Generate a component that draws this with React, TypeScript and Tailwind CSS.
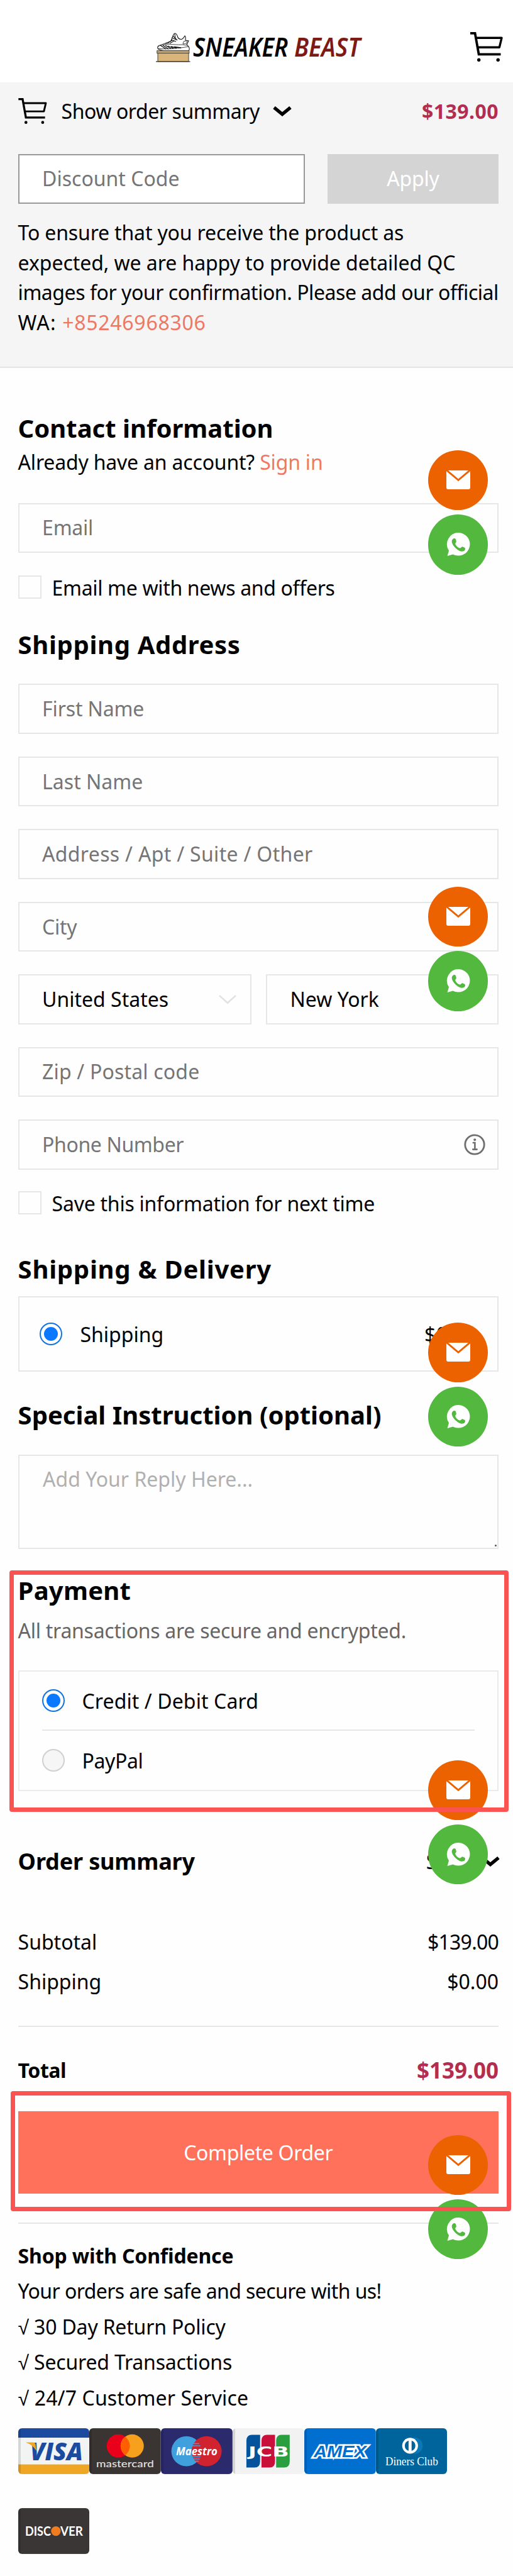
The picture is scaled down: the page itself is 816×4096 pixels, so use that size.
import React from 'react';
import { clsx } from 'clsx';

// ===== Icons =====

function CartIcon({ className }: { className?: string }) {
  return (
    <svg viewBox="0 0 52 47" fill="none" stroke="#000" className={className}>
      <path d="M0 1.9H7.6L13.6 35.4H48.5" strokeWidth="3.8" />
      <path d="M9.2 9.2H50L46.4 24.2H11.8" strokeWidth="3.4" strokeLinejoin="round" />
      <circle cx="13.7" cy="44.3" r="2.7" fill="#000" stroke="none" />
      <circle cx="44.2" cy="44.3" r="2.7" fill="#000" stroke="none" />
    </svg>
  );
}

function ChevronIcon({ className }: { className?: string }) {
  return (
    <svg viewBox="0 0 30 16" fill="none" stroke="currentColor" strokeWidth="5.4" className={className}>
      <path d="M2 2L15 12.6L28 2" />
    </svg>
  );
}

function InfoIcon() {
  return (
    <svg viewBox="0 0 34 34" fill="none" stroke="#6f6f6f" className="w-[34px] h-[34px]">
      <circle cx="17" cy="17" r="15.2" strokeWidth="2.8" />
      <path d="M14.8 14H17.4V24.4M14.2 24.6H20.6" strokeWidth="2.6" strokeLinecap="round" />
      <circle cx="17.2" cy="9.2" r="2" fill="#6f6f6f" stroke="none" />
    </svg>
  );
}

function MailIcon() {
  return (
    <svg viewBox="0 0 38 30" className="w-[38px] h-[30px]">
      <path d="M3 0H35L19 13.6Z" fill="#fff" />
      <path d="M0 1.2L19 17.2L38 1.2V27.6Q38 30 35.6 30H2.4Q0 30 0 27.6Z" fill="#fff" />
    </svg>
  );
}

function WhatsAppIcon() {
  return (
    <svg viewBox="0 0 38 37" className="w-[38px] h-[37px]">
      <path d="M19.2 0A18.3 18.3 0 1 1 10.4 34.4L1.6 37L4 28.4A18.3 18.3 0 0 1 19.2 0Z" fill="#fff" />
      <path
        d="M11.6 9.2C13.2 8.4 14.6 9.2 15 10.6L15.8 13.8C16.2 15.4 14.2 16.2 14.2 17.4C14.8 20.4 18.6 24 21.6 24.6C23.2 24.8 23.8 21.8 25.6 22.2L29 23.8C30.6 24.6 30.2 27.2 28.8 28.6C26.6 30.6 22 29.8 18.4 27.4C13 23.8 9 18.6 8.6 14C8.6 11.8 9.8 10.2 11.6 9.2Z"
        fill="#52b83e"
      />
    </svg>
  );
}

// ===== Logo =====

function Logo() {
  return (
    <svg viewBox="0 -12 336 68" className="w-[336px] h-[68px]">
      {/* shoe */}
      <path
        d="M4 21C10 18 20 16 24 13C26 8 27 4 29 1.5C31 0 33 2 34 5C35 9 37 11 41 10.5C44 9 45 7 46 5C48 6 47 9 47 12L52 13L49 19L51 21C54 24 54 28 51 29C40 31 14 30 6 27C2 26 2 23 4 21Z"
        fill="#fff"
        stroke="#1a1a1a"
        strokeWidth="1.1"
      />
      <path d="M3 22C16 15 24 20 42 19L49 20M4 25C18 27 36 25 52 22" fill="none" stroke="#333" strokeWidth="0.9" />
      <path d="M4 21L14 17L22 16L18 19Z" fill="#777" />
      <path d="M7 20L16 26M11 20L20 26M15 20L24 25.5M19 21L28 25M24 22L33 24.5M29 22.5L40 24" stroke="#111" strokeWidth="1.3" />
      <path d="M19 16L26 12M22 17L29 13M25 8L32 11M24 11L32 14M27 5L34 12M30 2L31 10" stroke="#111" strokeWidth="1.1" />
      <path d="M44 14L50 12.5L48.5 17L43 18Z" fill="#fff" stroke="#222" strokeWidth="0.8" />
      <path d="M14 28.6H51" stroke="#111" strokeWidth="1.4" />
      {/* box */}
      <rect x="3" y="32" width="49" height="13.8" fill="#d9b57c" stroke="#4a4234" strokeWidth="1" />
      <rect x="1.8" y="28.6" width="51" height="4" fill="#c3a571" stroke="#4a4234" strokeWidth="1" />
      <path d="M0 45.8H54.5" stroke="#333" strokeWidth="1.2" />
      <text
        x="59" y="37.6" textLength="151" lengthAdjust="spacingAndGlyphs" fontSize="41"
        className="font-['Noto_Sans'] font-semibold italic" fill="#000"
      >
        SNEAKER
      </text>
      <text
        x="220" y="37.6" textLength="105" lengthAdjust="spacingAndGlyphs" fontSize="41"
        className="font-['Noto_Sans'] font-semibold italic" fill="#7d1a14"
      >
        BEAST
      </text>
    </svg>
  );
}

// ===== Payment cards =====

function Card({ bg, children }: { bg: string; children: React.ReactNode }) {
  return (
    <svg viewBox="0 0 114 73" className="w-[113.8px] h-[73px] rounded-[6px]">
      <rect width="114" height="73" fill={bg} />
      {children}
      <rect width="4" height="73" fill="#000" opacity="0.12" />
    </svg>
  );
}

function VisaCard() {
  return (
    <Card bg="#f2f3f3">
      <rect width="114" height="15" fill="#1c4a9f" />
      <rect y="57.6" width="114" height="15.4" fill="#eea624" />
      <text
        x="19" y="50.8" textLength="84" lengthAdjust="spacingAndGlyphs" fontSize="39"
        className="font-['Open_Sans'] font-extrabold italic" fill="#1c4a9f"
      >
        VISA
      </text>
      <path d="M12 22.6H23.5Q27 22.8 27.6 26L29 36Q23 26.5 12 22.6Z" fill="#eea624" />
    </Card>
  );
}

function MasterCard() {
  return (
    <Card bg="#3a3433">
      <circle cx="46.2" cy="28.2" r="18.5" fill="#eb001b" />
      <circle cx="68.4" cy="28.2" r="18.5" fill="#f6a01e" />
      <path d="M57.3 13.4A18.5 18.5 0 0 1 57.3 43A18.5 18.5 0 0 1 57.3 13.4Z" fill="#ff5f00" />
      <text
        x="11" y="62" textLength="92" lengthAdjust="spacingAndGlyphs" fontSize="16"
        className="font-['Lato'] font-medium" fill="#e3e1e1"
      >
        mastercard
      </text>
    </Card>
  );
}

function MaestroCard() {
  return (
    <Card bg="#2b2a6c">
      <circle cx="40.6" cy="36.6" r="24" fill="#409fdd" />
      <circle cx="72.8" cy="36.6" r="24" fill="#d0222f" />
      <path d="M52 24.5H61M50 28H63M50 45.5H63M52 49H62M55 52.5H60" stroke="#409fdd" strokeWidth="1.5" />
      <text
        x="24" y="43" textLength="66" lengthAdjust="spacingAndGlyphs" fontSize="17.5"
        className="font-['Open_Sans'] font-bold italic" fill="#fff"
      >
        Maestro
      </text>
    </Card>
  );
}

function JcbCard() {
  return (
    <Card bg="#f2f2f2">
      <path d="M22 20Q22 10.4 31 10.4H43.8V53Q43.8 62.6 35 62.6H22Z" fill="#02529c" />
      <path d="M46 20Q46 10.4 55 10.4H67.6V53Q67.6 62.6 59 62.6H46Z" fill="#c8103a" />
      <path d="M69.4 20Q69.4 10.4 78 10.4H91V53Q91 62.6 82 62.6H69.4Z" fill="#2a9f40" />
      <text
        x="25" y="44.8" textLength="65" lengthAdjust="spacingAndGlyphs" fontSize="21.5"
        className="font-['DejaVu_Sans'] font-bold" fill="#fff"
      >
        JCB
      </text>
    </Card>
  );
}

function AmexCard() {
  return (
    <Card bg="#016fd0">
      <text
        x="15" y="46" textLength="84" lengthAdjust="spacingAndGlyphs" fontSize="26"
        className="font-['Liberation_Sans'] font-bold italic" fill="#016fd0"
        stroke="#fff" strokeWidth="5" paintOrder="stroke"
      >
        AMEX
      </text>
    </Card>
  );
}

function DinersCard() {
  return (
    <Card bg="#00649c">
      <ellipse cx="62" cy="27.8" rx="12.5" ry="13" fill="#0a78b4" />
      <circle cx="54.4" cy="27.8" r="12.6" fill="#fff" />
      <path d="M52 19.6A8.6 8.6 0 0 0 52 36ZM56.8 19.6A8.6 8.6 0 0 1 56.8 36Z" fill="#00649c" />
      <text
        x="15" y="58.6" textLength="84" lengthAdjust="spacingAndGlyphs" fontSize="18.5"
        className="font-['Liberation_Serif']" fill="#fff"
      >
        Diners Club
      </text>
    </Card>
  );
}

function DiscoverCard() {
  return (
    <Card bg="#3a3635">
      <text
        x="11" y="43.8" textLength="41" lengthAdjust="spacingAndGlyphs" fontSize="20.5"
        className="font-['Lato'] font-bold" fill="#fff"
      >
        DISC
      </text>
      <circle cx="60" cy="36.6" r="7.7" fill="#ef7d20" />
      <text
        x="67" y="43.8" textLength="36" lengthAdjust="spacingAndGlyphs" fontSize="20.5"
        className="font-['Lato'] font-bold" fill="#fff"
      >
        VER
      </text>
    </Card>
  );
}

// ===== Form pieces =====

function Field({ label, className, children }: { label: string; className?: string; children?: React.ReactNode }) {
  return (
    <div className={clsx('h-[79.2px] flex items-center justify-between border-2 border-[#e7e7e7] pl-[36.5px]', className)}>
      <span>{label}</span>
      {children}
    </div>
  );
}

function Check({ label, className }: { label: string; className?: string }) {
  return (
    <label className={clsx('flex items-center h-12', className)}>
      <span className="w-[37px] h-[37px] mb-[3px] border-2 border-[#e7e7e7]" />
      <span className="ml-[17px]">{label}</span>
    </label>
  );
}

function Radio({ checked }: { checked?: boolean }) {
  return (
    <span
      className={clsx(
        'w-[36.4px] h-[36.4px] rounded-full flex items-center justify-center',
        checked ? 'border-[2.5px] border-[#1274e0]' : 'border-2 border-[#d0d0d0] bg-[#f6f6f6]',
      )}
    >
      {checked && <span className="w-[22px] h-[22px] rounded-full bg-[#0a78ff]" />}
    </span>
  );
}

// Floating mail + WhatsApp buttons
function ContactButtons({ className }: { className: string }) {
  return (
    <div className={clsx('absolute left-[680.7px] flex flex-col gap-[6.6px]', className)}>
      <a className="w-[95.7px] h-[95.7px] rounded-full bg-[#ec6200] flex items-center justify-center pb-[1px]">
        <MailIcon />
      </a>
      <a className="w-[95.7px] h-[95.7px] rounded-full bg-[#52b83e] flex items-center justify-center">
        <WhatsAppIcon />
      </a>
    </div>
  );
}

export default function App() {
  return (
    <div className="relative w-[816px] h-[4096px] overflow-hidden bg-[#fefefe] text-black text-[32px] leading-[48px] font-['Noto_Sans',sans-serif] whitespace-nowrap">
      {/* Header */}
      <header className="h-[131px] bg-white flex items-start justify-between pl-[248px] pr-[16.5px] pt-[40px]">
        <Logo />
        <CartIcon className="w-[52px] h-[47px] mt-[11px]" />
      </header>

      {/* Summary bar */}
      <section className="h-[454px] bg-[#f5f5f5] border-b-2 border-[#e5e5e5] pl-[28.6px] pr-[23px] pt-[25px]">
        <div className="h-[41px] flex items-center">
          <CartIcon className="w-[46px] h-[41px]" />
          <span className="ml-[23px] tracking-[-0.44px]">Show order summary</span>
          <ChevronIcon className="w-[30px] h-[16px] ml-[21px]" />
          <span className="ml-auto font-bold text-[#b32d50] tracking-[0.45px]">$139.00</span>
        </div>
        <div className="mt-[47.7px] h-[79.4px] flex">
          <div className="w-[456px] border-2 border-[#999] bg-white text-[#757575] pl-[36.5px] flex items-center">Discount Code</div>
          <button className="ml-auto w-[272px] bg-[#d4d4d4] text-white tracking-[-0.19px]">Apply</button>
        </div>
        <p className="mt-[22px] leading-[47.5px]">
          <span className="tracking-[-0.16px]">To ensure that you receive the product as</span>
          <br />
          <span className="tracking-[-0.07px]">expected, we are happy to provide detailed QC</span>
          <br />
          <span className="tracking-[-0.45px]">images for your confirmation. Please add our official</span>
          <br />
          <span className="tracking-[1.2px]">WA: </span>
          <span className="text-[#ee7864] tracking-[0.72px]">+85246968306</span>
        </p>
      </section>

      <main className="pl-[28.6px] pr-[23px] pt-[72px]">
        {/* Contact */}
        <h2 className="text-[40px] font-bold">Contact information</h2>
        <p className="mt-[5.6px] tracking-[-0.19px]">
          Already have an account? <a className="text-[#ee7864]">Sign in</a>
        </p>
        <Field label="Email" className="mt-[41px] text-[#757575] tracking-[-0.23px]" />
        <div className="mt-[32.3px]">
          <Check label="Email me with news and offers" className="tracking-[-0.33px]" />
        </div>

        {/* Address */}
        <h2 className="mt-[42.3px] text-[40px] font-bold tracking-[0.65px]">Shipping Address</h2>
        <div className="mt-[38.1px] flex flex-col gap-[36.3px] text-[#757575]">
          <Field label="First Name" className="tracking-[-0.14px]" />
          <Field label="Last Name" />
          <Field label="Address / Apt / Suite / Other" className="tracking-[0.32px]" />
          <Field label="City" className="tracking-[-0.28px]" />
          <div className="flex justify-between text-black">
            <Field label="United States" className="w-[371.5px] pr-[22px]">
              <svg viewBox="0 0 28 15" className="w-[28px] h-[15px]" fill="none" stroke="#e2e2e2" strokeWidth="2.6">
                <path d="M1 1L14 12.8L27 1" />
              </svg>
            </Field>
            <Field label="New York" className="w-[370px]" />
          </div>
          <Field label="Zip / Postal code" className="tracking-[0.17px]" />
          <Field label="Phone Number" className="pr-[19px] tracking-[-0.38px]">
            <InfoIcon />
          </Field>
        </div>
        <div className="mt-[30.3px]">
          <Check label="Save this information for next time" className="tracking-[-0.24px]" />
        </div>

        {/* Delivery */}
        <h2 className="mt-[56px] text-[40px] font-bold tracking-[0.75px]">Shipping &amp; Delivery</h2>
        <div className="mt-[19.6px] h-[119.3px] border-2 border-[#e7e7e7] flex items-center pl-[32.5px] pr-[32px]">
          <Radio checked />
          <span className="ml-[28px] pt-[2px]">Shipping</span>
          <span className="ml-auto pt-[2px] tracking-[0.43px]">$0.00</span>
        </div>

        {/* Instruction */}
        <h2 className="mt-[45.4px] text-[40px] font-bold">Special Instruction (optional)</h2>
        <div className="mt-[38.7px] h-[150.2px] border-2 border-[#e7e7e7] pl-[37.5px] pt-[13px] pr-[1px] pb-[2px] text-[#b0b0b0] flex justify-between">
          <span>Add Your Reply Here...</span>
          <span className="self-end w-[3px] h-[3px] rounded-full bg-[#555]" />
        </div>

        {/* Payment */}
        <h2 className="mt-[42px] text-[40px] font-bold tracking-[0.23px]">Payment</h2>
        <p className="mt-[16.1px] text-[#666] tracking-[-0.27px]">All transactions are secure and encrypted.</p>
        <div className="mt-[39px] h-[191.4px] border-2 border-[#ebebeb] px-[36.5px]">
          <div className="h-[94px] flex items-center border-b-2 border-[#e7e7e7]">
            <Radio checked />
            <span className="ml-[27px] pt-[2px] tracking-[0.1px]">Credit / Debit Card</span>
          </div>
          <div className="h-[94px] flex items-center">
            <Radio />
            <span className="ml-[27px] pt-[2px] tracking-[-0.37px]">PayPal</span>
          </div>
        </div>

        {/* Order summary */}
        <div className="mt-[88.7px] flex items-center">
          <h3 className="text-[36px] font-bold tracking-[-0.16px]">Order summary</h3>
          <span className="ml-auto">Show</span>
          <ChevronIcon className="w-[30px] h-[16px] ml-[6px] -mr-[2px]" />
        </div>
        <div className="mt-[80px] flex justify-between">
          <span>Subtotal</span>
          <span className="tracking-[-0.78px]">$139.00</span>
        </div>
        <div className="mt-[14.9px] flex justify-between">
          <span>Shipping</span>
          <span>$0.00</span>
        </div>
        <div className="mt-[46px] border-t-2 border-[#e7e7e7] pt-[45px] flex justify-between font-bold">
          <span className="tracking-[-0.45px]">Total</span>
          <span className="text-[35px] text-[#b32d50]">$139.00</span>
        </div>
        <button className="mt-[41px] w-full h-[131px] block bg-[#ff715b] text-white tracking-[-0.34px]">Complete Order</button>

        {/* Confidence */}
        <div className="mt-[45.6px] border-t-2 border-[#e7e7e7] pt-[23px] leading-[56.6px]">
          <h4 className="font-bold tracking-[-0.16px]">Shop with Confidence</h4>
          <p className="tracking-[-0.58px]">Your orders are safe and secure with us!</p>
          <p className="tracking-[-0.19px]">√ 30 Day Return Policy</p>
          <p className="tracking-[-0.19px]">√ Secured Transactions</p>
          <p className="tracking-[0.13px]">√ 24/7 Customer Service</p>
        </div>
        <div className="mt-[19px] flex">
          <VisaCard />
          <MasterCard />
          <MaestroCard />
          <JcbCard />
          <AmexCard />
          <DinersCard />
        </div>
        <div className="mt-[54px] flex">
          <DiscoverCard />
        </div>
      </main>

      <ContactButtons className="top-[715.7px]" />
      <ContactButtons className="top-[1409.7px]" />
      <ContactButtons className="top-[2102.5px]" />
      <ContactButtons className="top-[2798.5px]" />
      <ContactButtons className="top-[3394.5px]" />

      {/* Highlights */}
      <div className="absolute left-[15px] top-[2497px] w-[794px] h-[383.5px] border-[7.5px] border-[#fb5252] rounded-[4px]" />
      <div className="absolute left-[16.7px] top-[3325px] w-[796px] h-[190.5px] border-[7.5px] border-[#fb5252] rounded-[4px]" />
    </div>
  );
}
